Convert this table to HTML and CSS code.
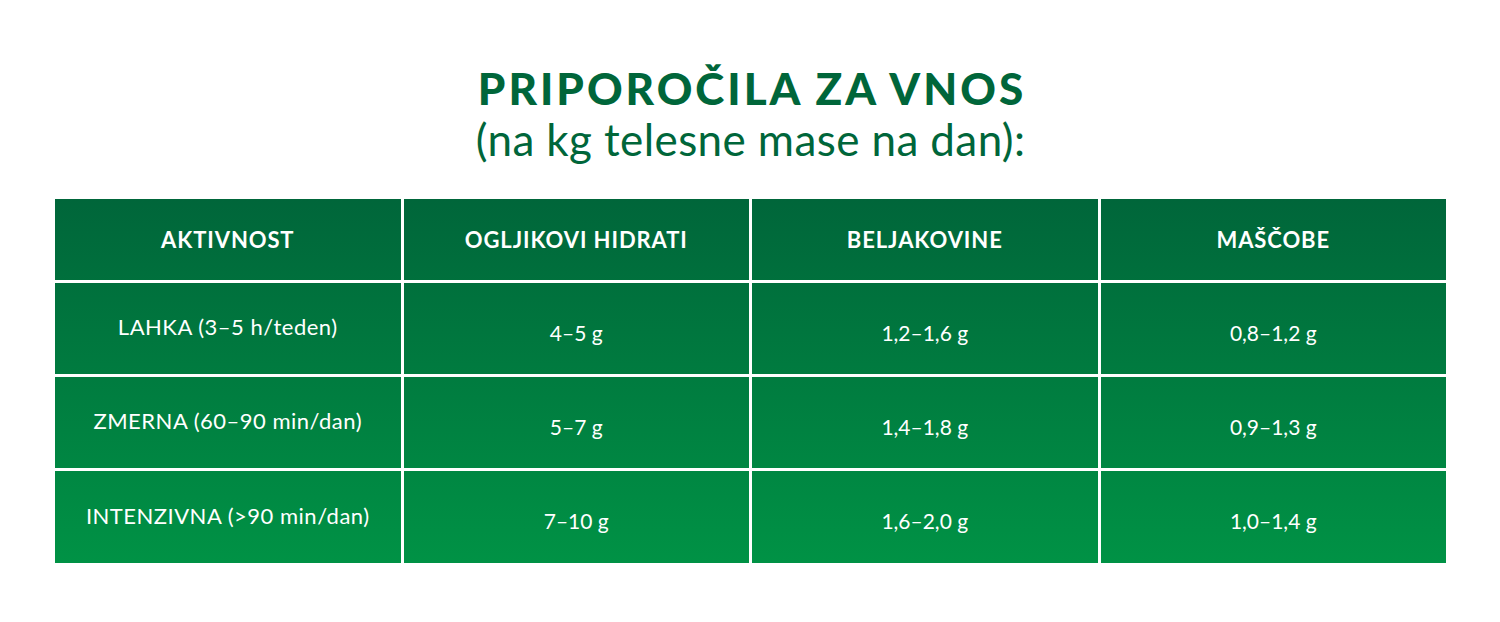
FILE: index.html
```html
<!DOCTYPE html>
<html lang="sl">
<head>
<meta charset="utf-8">
<title>Priporočila za vnos</title>
<link rel="stylesheet" href="styles.css">
</head>
<body>
<main class="page">
  <header class="heading">
    <h1 class="title">PRIPOROČILA ZA VNOS</h1>
    <p class="subtitle">(na kg telesne mase na dan):</p>
  </header>
  <section class="table">
    <div class="cell head">AKTIVNOST</div>
    <div class="cell head">OGLJIKOVI HIDRATI</div>
    <div class="cell head">BELJAKOVINE</div>
    <div class="cell head">MAŠČOBE</div>

    <div class="cell label">LAHKA (3–5 h/teden)</div>
    <div class="cell value">4–5 g</div>
    <div class="cell value">1,2–1,6 g</div>
    <div class="cell value">0,8–1,2 g</div>

    <div class="cell label">ZMERNA (60–90 min/dan)</div>
    <div class="cell value">5–7 g</div>
    <div class="cell value">1,4–1,8 g</div>
    <div class="cell value">0,9–1,3 g</div>

    <div class="cell label">INTENZIVNA (&gt;90 min/dan)</div>
    <div class="cell value">7–10 g</div>
    <div class="cell value">1,6–2,0 g</div>
    <div class="cell value">1,0–1,4 g</div>
  </section>
</main>
</body>
</html>
```

FILE: styles.css
```css
html, body {
  margin: 0;
  padding: 0;
  background: #ffffff;
}

body {
  font-family: "Lato", "Open Sans", sans-serif;
}

.page {
  width: 1500px;
  height: 622px;
  padding: 62px 54px 0 55px;
  box-sizing: border-box;
}

.heading {
  height: 137px;
  text-align: center;
  color: #00663a;
}

.title {
  margin: 0;
  font-size: 44px;
  line-height: 52px;
  font-weight: 900;
  letter-spacing: 3px;
  padding-left: 3px;
}

.subtitle {
  margin: 0;
  font-size: 44px;
  line-height: 50px;
  font-weight: 400;
  letter-spacing: 0.4px;
}

.table {
  display: grid;
  grid-template-columns: repeat(4, 1fr);
  grid-template-rows: 81px 91px 91px 92px;
  gap: 3px;
}

.cell {
  display: flex;
  align-items: center;
  justify-content: center;
  color: #ffffff;
  background-image: linear-gradient(to bottom, #00663a 199px, #009245 563px);
  background-attachment: fixed;
  font-size: 21px;
}

.head {
  font-weight: 700;
  font-size: 22px;
  letter-spacing: 0.9px;
}

.label {
  font-size: 22px;
  letter-spacing: 0.5px;
  padding-bottom: 4px;
}

.value {
  padding-top: 7px;
}
```
